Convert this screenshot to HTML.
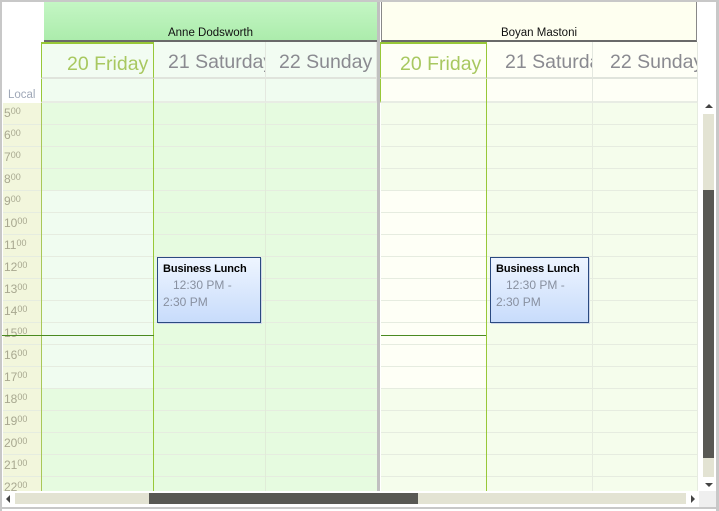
<!DOCTYPE html>
<html><head><meta charset="utf-8"><style>
*{margin:0;padding:0;box-sizing:border-box}
body{width:719px;height:511px;background:#fff;position:relative;overflow:hidden;font-family:"Liberation Sans",sans-serif}
.a{position:absolute}
.lines{background-image:repeating-linear-gradient(to bottom,transparent 0,transparent 21px,#e6ece0 21px,#e6ece0 22px)}
.dh{position:absolute;top:42px;height:37px;border-right:1px solid #e4e8e0;border-bottom:2px solid #e0e4dc;overflow:hidden;white-space:nowrap;font-size:19.5px;color:#8a8a90;line-height:40px}
.ad{position:absolute;top:79px;height:24px;border-right:1px solid #e4e8e0;border-bottom:2px solid #e8ece4}
.t{position:absolute;left:4px;font-size:12px;color:#a8a890;line-height:14px}
.t sup{font-size:9px;vertical-align:3px}
.appt{position:absolute;height:66px;border:1px solid #2a4a80;background:linear-gradient(#eef5ff,#c8dcfb);box-shadow:1px 1px 0 #d0d8e8;font-size:11px;padding:3px 5px;line-height:16px;white-space:nowrap;overflow:hidden}
.appt b{color:#000;font-size:11px;letter-spacing:-0.1px}
.appt span{color:#8890a0;font-size:12px}
</style></head><body>
<div class="a" style="left:0;top:0;width:719px;height:2px;background:#c8c8c8"></div>
<div class="a" style="left:0;top:0;width:2px;height:511px;background:#c8c8c8"></div>
<div class="a" style="left:716px;top:0;width:3px;height:511px;background:#c8c8c8"></div>
<div class="a" style="left:0;top:507px;width:719px;height:2px;background:#c8c8c8"></div>

<div class="a" style="left:44px;top:2px;width:333px;height:40px;background:linear-gradient(#c4f6c4,#acecac);border-bottom:2px solid #6a6a6a;text-align:center;font-size:11.5px;line-height:14px;padding-top:24px;color:#111">Anne Dodsworth</div>
<div class="a" style="left:381px;top:2px;width:316px;height:40px;background:#fefff0;border:1px solid #888;border-top:none;border-bottom:2px solid #6a6a6a;text-align:center;font-size:11.5px;line-height:14px;padding-top:24px;color:#111">Boyan Mastoni</div>
<div class="a" style="left:377px;top:2px;width:3px;height:489px;background:#c0c0c0"></div>

<div class="a" style="left:8px;top:89px;font-size:11.5px;color:#a0a8b8">Local</div>
<div class="a lines" style="left:3px;top:103px;width:39px;height:388px;background-color:#f2f6dc;border-right:1px solid #a8c858"></div>
<div class="t" style="top:104px">5<sup>00</sup></div>
<div class="t" style="top:126px">6<sup>00</sup></div>
<div class="t" style="top:148px">7<sup>00</sup></div>
<div class="t" style="top:170px">8<sup>00</sup></div>
<div class="t" style="top:192px">9<sup>00</sup></div>
<div class="t" style="top:214px">10<sup>00</sup></div>
<div class="t" style="top:236px">11<sup>00</sup></div>
<div class="t" style="top:258px">12<sup>00</sup></div>
<div class="t" style="top:280px">13<sup>00</sup></div>
<div class="t" style="top:302px">14<sup>00</sup></div>
<div class="t" style="top:324px">15<sup>00</sup></div>
<div class="t" style="top:346px">16<sup>00</sup></div>
<div class="t" style="top:368px">17<sup>00</sup></div>
<div class="t" style="top:390px">18<sup>00</sup></div>
<div class="t" style="top:412px">19<sup>00</sup></div>
<div class="t" style="top:434px">20<sup>00</sup></div>
<div class="t" style="top:456px">21<sup>00</sup></div>
<div class="t" style="top:478px">22<sup>00</sup></div>

<div class="dh" style="left:41px;width:113px;background:#f2fcf2;border-top:2px solid #98c838;border-left:1px solid #98c838;border-right:1px solid #98c838;color:#a8c860;padding-left:25px">20 Friday</div>
<div class="dh" style="left:154px;width:112px;background:#f2fcf2;padding-left:14px">21 Saturday</div>
<div class="dh" style="left:266px;width:111px;background:#f2fcf2;padding-left:13px">22 Sunday</div>
<div class="ad" style="left:41px;width:113px;background:#f0fcf0;border-right:1px solid #98c838;border-left:1px solid #98c838"></div>
<div class="ad" style="left:154px;width:112px;background:#f0fcf0"></div>
<div class="ad" style="left:266px;width:111px;background:#f0fcf0"></div>

<div class="a lines" style="left:42px;top:103px;width:111px;height:388px;background-color:#e6fbe0"></div>
<div class="a lines" style="left:42px;top:191px;width:111px;height:198px;background-color:#f0fcf0"></div>
<div class="a" style="left:153px;top:79px;width:1px;height:412px;background:#98c838"></div>
<div class="a lines" style="left:154px;top:103px;width:112px;height:388px;background-color:#e6fbe0;border-right:1px solid #e0ecd8"></div>
<div class="a lines" style="left:266px;top:103px;width:111px;height:388px;background-color:#e6fbe0"></div>
<div class="a" style="left:2px;top:335px;width:152px;height:1px;background:#4a8a20"></div>

<div class="dh" style="left:380px;width:107px;background:#fefff6;border-top:2px solid #98c838;border-left:1px solid #98c838;border-right:1px solid #98c838;color:#a8c860;padding-left:19px">20 Friday</div>
<div class="dh" style="left:487px;width:106px;background:#fefff6;padding-left:18px">21 Saturday</div>
<div class="dh" style="left:593px;width:105px;background:#fefff6;padding-left:17px">22 Sunday</div>
<div class="ad" style="left:380px;width:107px;background:#fefff6;border-left:1px solid #98c838;border-right:1px solid #98c838"></div>
<div class="ad" style="left:487px;width:106px;background:#fefff6"></div>
<div class="ad" style="left:593px;width:105px;background:#fefff6"></div>

<div class="a lines" style="left:381px;top:103px;width:105px;height:388px;background-color:#f5fdec"></div>
<div class="a lines" style="left:381px;top:191px;width:105px;height:198px;background-color:#fefff6"></div>
<div class="a" style="left:486px;top:79px;width:1px;height:412px;background:#98c838"></div>
<div class="a lines" style="left:487px;top:103px;width:106px;height:388px;background-color:#f5fdec;border-right:1px solid #e6ece0"></div>
<div class="a lines" style="left:593px;top:103px;width:105px;height:388px;background-color:#f5fdec;border-right:1px solid #e6ece0"></div>
<div class="a" style="left:381px;top:335px;width:105px;height:1px;background:#4a8a20"></div>

<div class="appt" style="left:157px;top:257px;width:104px"><b>Business Lunch</b><br><span>&nbsp;&nbsp;&nbsp;12:30 PM -<br>2:30 PM</span></div>
<div class="appt" style="left:490px;top:257px;width:99px"><b>Business Lunch</b><br><span>&nbsp;&nbsp;&nbsp;12:30 PM -<br>2:30 PM</span></div>

<div class="a" style="left:703px;top:114px;width:11px;height:363px;background:#e3e3d3"></div>
<div class="a" style="left:703px;top:190px;width:11px;height:268px;background:#585853"></div>
<div class="a" style="left:705px;top:104px;width:0;height:0;border-left:4px solid transparent;border-right:4px solid transparent;border-bottom:4px solid #444"></div>
<div class="a" style="left:705px;top:483px;width:0;height:0;border-left:4px solid transparent;border-right:4px solid transparent;border-top:4px solid #444"></div>

<div class="a" style="left:15px;top:493px;width:671px;height:11px;background:#e3e3d3"></div>
<div class="a" style="left:149px;top:493px;width:269px;height:11px;background:#585853"></div>
<div class="a" style="left:6px;top:495px;width:0;height:0;border-top:4px solid transparent;border-bottom:4px solid transparent;border-right:4px solid #444"></div>
<div class="a" style="left:691px;top:495px;width:0;height:0;border-top:4px solid transparent;border-bottom:4px solid transparent;border-left:4px solid #444"></div>
<div class="a" style="left:699px;top:491px;width:17px;height:16px;background:#efefef"></div>
</body></html>
